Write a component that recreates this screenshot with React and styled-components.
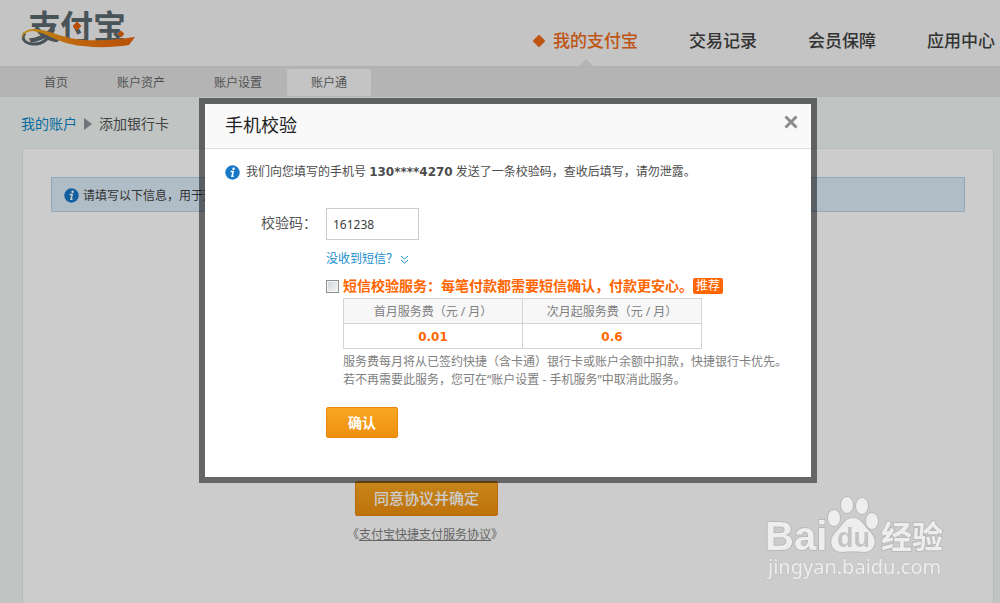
import { useState } from 'react';
import styled, { createGlobalStyle } from 'styled-components';

const GlobalStyle = createGlobalStyle`
  * {
    box-sizing: border-box;
  }

  body {
    margin: 0;
    color: #4c4c4c;
    background: #f0f5f4;
    font-family: 'Noto Sans', 'Noto Sans CJK SC', sans-serif;
    font-size: 12px;
    line-height: 18px;
  }

  h2,
  p,
  ul,
  ol {
    margin: 0;
    padding: 0;
  }

  ul,
  ol {
    list-style: none;
  }

  button,
  input {
    font-family: inherit;
  }
`;

const Page = styled.div`
  display: flex;
  flex-direction: column;
  min-height: 100vh;
`;

const Header = styled.header`
  display: flex;
  justify-content: space-between;
  align-items: flex-start;
  height: 66px;
  padding: 0 5px 0 20px;
  background: #f6f6f6;
`;

const LogoLink = styled.a`
  display: block;

  svg {
    display: block;
  }
`;

const MainNav = styled.ul`
  display: flex;
  gap: 51px;
  padding-top: 16px;
`;

const MainNavItem = styled.li`
  position: relative;
  height: 50px;

  &::after {
    content: '';
    display: ${({ $active }) => ($active ? 'block' : 'none')};
    position: absolute;
    bottom: 0;
    left: 50%;
    margin-left: -7px;
    border: 7px solid transparent;
    border-top: 0;
    border-bottom-color: #e2e2e2;
  }
`;

const MainNavLink = styled.a`
  display: flex;
  align-items: center;
  gap: 8px;
  color: ${({ $active }) => ($active ? '#ef6a18' : '#404040')};
  font-size: 17px;
  font-weight: 500;
  line-height: 50px;
  text-decoration: none;
`;

const SubNav = styled.ul`
  display: flex;
  align-items: center;
  gap: 1px;
  height: 31px;
  padding-left: 20px;
  border-top: 1px solid #dcdcdc;
  background: #e2e2e2;
`;

const SubNavLink = styled.a`
  display: block;
  padding: 1px 24px 0;
  border-radius: 2px;
  background: ${({ $active }) => ($active ? '#f6f6f6' : 'transparent')};
  color: #666;
  line-height: 26px;
  text-decoration: none;
`;

const Breadcrumb = styled.ol`
  display: flex;
  align-items: center;
  gap: 7px;
  height: 51px;
  padding: 2px 21px 0;
  color: #555;
  font-size: 14px;

  a {
    color: #0b87c8;
    text-decoration: none;
  }

  li {
    display: flex;
    align-items: center;
    gap: 7px;
  }
`;

const Panel = styled.main`
  flex: 1;
  margin: 0 6px 0 22px;
  padding: 28px 28px 0;
  border: 1px solid #e8e8e8;
  border-bottom: 0;
  background: #fff;
`;

const InfoBar = styled.p`
  display: flex;
  align-items: center;
  gap: 4px;
  height: 35px;
  padding: 2px 12px 0;
  border: 1px solid #bad3e6;
  background: #dcecf8;
  color: #404040;
`;

const Agreement = styled.form`
  display: flex;
  flex-direction: column;
  align-items: flex-start;
  padding: 269px 0 0 304px;
`;

const OrangeButton = styled.button`
  height: ${({ $large }) => ($large ? '35px' : '31px')};
  padding: ${({ $large }) => ($large ? '0 18px 2px' : '0 21px')};
  border: 1px solid #ea860d;
  border-radius: 2px;
  background: linear-gradient(#f9a722, #ef8f10);
  color: #fff;
  font-size: ${({ $large }) => ($large ? '15px' : '14px')};
  font-weight: ${({ $large }) => ($large ? 500 : 700)};
  line-height: 20px;
  cursor: pointer;
`;

const AgreementNote = styled.p`
  margin: 10px 0 0 -8px;
  color: #808080;

  a {
    color: inherit;
  }
`;

const Overlay = styled.div`
  position: fixed;
  inset: 0;
  display: flex;
  justify-content: center;
  align-items: flex-start;
  padding: 98px 0 0 16px;
  background: rgba(0, 0, 0, 0.2);
`;

const Dialog = styled.section`
  width: 100%;
  max-width: 618px;
  border: 6px solid rgba(0, 0, 0, 0.5);
  background: #fff;
  background-clip: padding-box;
`;

const DialogHeader = styled.div`
  display: flex;
  justify-content: space-between;
  align-items: flex-start;
  height: 45px;
  padding: 0 13px 0 20px;
  border-bottom: 1px solid #ddd;
  background: #f9f9f9;

  h2 {
    color: #222;
    font-size: 18px;
    font-weight: 400;
    line-height: 42px;
  }
`;

const CloseButton = styled.button`
  margin-top: 11px;
  padding: 0;
  border: 0;
  background: none;
  cursor: pointer;

  svg {
    display: block;
  }
`;

const DialogBody = styled.div`
  padding: 13px 20px 39px;
`;

const SentMessage = styled.p`
  display: flex;
  align-items: center;
  gap: 6px;
  line-height: 20px;

  strong {
    font-family: 'DejaVu Sans', sans-serif;
  }
`;

const CodeForm = styled.form`
  display: grid;
  grid-template-columns: 101px 1fr;
  margin-top: 26px;
`;

const CodeLabel = styled.label`
  padding-left: 36px;
  color: #555;
  font-size: 14px;
  line-height: 30px;
  white-space: nowrap;
`;

const Fields = styled.div`
  display: flex;
  flex-direction: column;
  align-items: flex-start;
`;

const CodeInput = styled.input`
  width: 93px;
  height: 32px;
  padding: 0 6px;
  border: 1px solid #ccc;
  background: #fff;
  color: #404040;
  font-size: 12px;
`;

const HelpLink = styled.a`
  display: flex;
  align-items: center;
  gap: 2px;
  margin-top: 10px;
  color: #1a8fd0;
  text-decoration: none;
`;

const Service = styled.div`
  display: grid;
  grid-template-columns: 12px 1fr;
  column-gap: 5px;
  margin-top: 8px;
`;

const Checkbox = styled.input`
  appearance: none;
  width: 13px;
  height: 13px;
  margin: 4px 0 0;
  border: 1px solid #8e8f8f;
  background: linear-gradient(135deg, #cfd3d7, #f6f6f6);
  box-shadow: inset 0 0 0 1px #f4f4f4;

  &:checked {
    background: #ff6600;
  }
`;

const ServiceTitle = styled.div`
  display: flex;
  align-items: center;
  height: 20px;
  color: #ff6600;
  font-size: 14px;
  white-space: nowrap;

  label {
    font-weight: 700;
  }
`;

const Badge = styled.span`
  padding: 0 3px;
  border-radius: 2px;
  background: #ff6600;
  color: #fff;
  font-size: 12px;
  line-height: 16px;
`;

const FeeTable = styled.table`
  width: 359px;
  margin-top: 2px;
  border-collapse: collapse;
  table-layout: fixed;
  text-align: center;

  th,
  td {
    height: 25px;
    padding: 2px 0 0;
    border: 1px solid #d4d4d4;
  }

  th {
    background: #f7f7f7;
    color: #808080;
    font-weight: 400;
  }

  td {
    color: #ff6600;
    font-family: 'DejaVu Sans', sans-serif;
    font-weight: 700;
  }
`;

const Notes = styled.p`
  margin: 4px 0 18px;
  color: #808080;
  white-space: nowrap;
`;

const Watermark = styled.svg`
  position: fixed;
  right: 50px;
  bottom: 15px;
`;

const mainNav = ['我的支付宝', '交易记录', '会员保障', '应用中心'];
const subNav = ['首页', '账户资产', '账户设置', '账户通'];
const fees = [
  { title: '首月服务费（元 / 月）', price: '0.01' },
  { title: '次月起服务费（元 / 月）', price: '0.6' },
];

const Logo = () => (
  <svg width='118' height='54' viewBox='20 0 118 54' role='img' aria-label='支付宝'>
    <defs>
      <linearGradient id='ribbon' x1='0' x2='1'>
        <stop offset='0' stopColor='#f0b01c' />
        <stop offset='0.5' stopColor='#ee7d12' />
        <stop offset='1' stopColor='#e8650a' />
      </linearGradient>
    </defs>
    <g
      fill='#5c696e'
      fontFamily="'Noto Sans CJK SC', sans-serif"
      fontSize='33'
      fontWeight='700'
    >
      <text x='28' y='39'>支</text>
      <text x='60' y='39'>付</text>
      <text x='93' y='39'>宝</text>
    </g>
    <path
      d='M54 29C49 39 42 45 32 44C24 43 21 38 25 33'
      fill='none'
      stroke='#5c696e'
      strokeWidth='3'
    />
    <path
      d='M22 39C21 32 27 29 34 29C48 29 60 38 84 40C103 41 121 39 135 37L129 45C111 48 88 48 70 44C53 40 45 32 33 31C27 31 23 34 22 39Z'
      fill='url(#ribbon)'
    />
    <path d='M77 22L81 26L77 30L73 26Z' fill='#e8650a' stroke='#e8650a' strokeLinejoin='round' />
    <path d='M121 31L124 34L121 37L118 34Z' fill='#e8650a' stroke='#e8650a' strokeLinejoin='round' />
  </svg>
);

const InfoIcon = () => (
  <svg width='15' height='15' viewBox='0 0 15 15' aria-hidden='true'>
    <circle cx='7.5' cy='7.5' r='7.2' fill='#1878c8' />
    <circle cx='8.6' cy='3.8' r='1.3' fill='#fff' />
    <path d='M5.6 6.5H8.2L7 11.2H8.6' fill='none' stroke='#fff' strokeWidth='1.5' />
  </svg>
);

const BaiduMark = () => (
  <Watermark width='200' height='94' viewBox='0 0 200 94' role='img' aria-label='Baidu 经验'>
    <g
      fill='#eee'
      stroke='#bababa'
      strokeWidth='2'
      paintOrder='stroke'
      fontFamily="'Liberation Sans', 'Noto Sans CJK SC', sans-serif"
      fontWeight='700'
    >
      <text x='15' y='56' fontSize='40'>Bai</text>
      <text x='131' y='54' fontSize='31'>经验</text>
      <ellipse cx='84' cy='24' rx='6' ry='8' />
      <ellipse cx='97' cy='11' rx='6' ry='8' />
      <ellipse cx='112' cy='12' rx='6' ry='8' />
      <ellipse cx='122' cy='27' rx='6' ry='8' />
      <path d='M103 24C111 24 114 32 120 38C129 47 124 58 114 58C107 57 99 57 92 58C82 58 77 47 86 38C92 32 95 24 103 24Z' />
    </g>
    <text
      x='87'
      y='53'
      fill='#c4c4c4'
      fontFamily="'Liberation Sans', sans-serif"
      fontSize='27'
      fontWeight='700'
    >
      du
    </text>
    <text
      x='18'
      y='80'
      fill='#eee'
      stroke='#bdbdbd'
      paintOrder='stroke'
      fontFamily="'Noto Sans', sans-serif"
      fontSize='20'
    >
      jingyan.baidu.com
    </text>
  </Watermark>
);

const VerifyDialog = () => {
  const [code, setCode] = useState('161238');

  return (
    <Overlay>
      <Dialog role='dialog' aria-labelledby='dialog-title'>
        <DialogHeader>
          <h2 id='dialog-title'>手机校验</h2>
          <CloseButton type='button' aria-label='关闭'>
            <svg width='14' height='14' viewBox='0 0 14 14'>
              <path d='M1.5 1.5L12.5 12.5M12.5 1.5L1.5 12.5' stroke='#8c8c8c' strokeWidth='3' />
            </svg>
          </CloseButton>
        </DialogHeader>
        <DialogBody>
          <SentMessage>
            <InfoIcon />
            <span>
              我们向您填写的手机号 <strong>130****4270</strong>{' '}
              发送了一条校验码，查收后填写，请勿泄露。
            </span>
          </SentMessage>
          <CodeForm onSubmit={(e) => e.preventDefault()}>
            <CodeLabel htmlFor='code'>校验码：</CodeLabel>
            <Fields>
              <CodeInput
                id='code'
                type='text'
                value={code}
                onChange={(e) => setCode(e.target.value)}
              />
              <HelpLink href='#help'>
                没收到短信？
                <svg width='9' height='9' viewBox='0 0 9 9' aria-hidden='true'>
                  <path
                    d='M1 1L4.5 4L8 1M1 5L4.5 8L8 5'
                    fill='none'
                    stroke='#1a8fd0'
                  />
                </svg>
              </HelpLink>
              <Service>
                <Checkbox id='service' type='checkbox' />
                <div>
                  <ServiceTitle>
                    <label htmlFor='service'>
                      短信校验服务：每笔付款都需要短信确认，付款更安心。
                    </label>
                    <Badge>推荐</Badge>
                  </ServiceTitle>
                  <FeeTable>
                    <thead>
                      <tr>
                        {fees.map((fee) => (
                          <th key={fee.title}>{fee.title}</th>
                        ))}
                      </tr>
                    </thead>
                    <tbody>
                      <tr>
                        {fees.map((fee) => (
                          <td key={fee.title}>{fee.price}</td>
                        ))}
                      </tr>
                    </tbody>
                  </FeeTable>
                  <Notes>
                    服务费每月将从已签约快捷（含卡通）银行卡或账户余额中扣款，快捷银行卡优先。
                    <br />
                    若不再需要此服务，您可在“账户设置 - 手机服务”中取消此服务。
                  </Notes>
                </div>
              </Service>
              <OrangeButton type='submit'>确认</OrangeButton>
            </Fields>
          </CodeForm>
        </DialogBody>
      </Dialog>
    </Overlay>
  );
};

const App = () => {
  return (
    <>
      <GlobalStyle />
      <Page>
        <Header>
          <LogoLink href='#home'>
            <Logo />
          </LogoLink>
          <nav>
            <MainNav>
              {mainNav.map((item, i) => (
                <MainNavItem key={item} $active={i === 0}>
                  <MainNavLink href='#nav' $active={i === 0}>
                    {i === 0 && (
                      <svg width='12' height='12' viewBox='0 0 12 12' aria-hidden='true'>
                        <path
                          d='M6 1L11 6L6 11L1 6Z'
                          fill='#ef6a18'
                          stroke='#ef6a18'
                          strokeWidth='2'
                          strokeLinejoin='round'
                        />
                      </svg>
                    )}
                    {item}
                  </MainNavLink>
                </MainNavItem>
              ))}
            </MainNav>
          </nav>
        </Header>
        <nav>
          <SubNav>
            {subNav.map((item) => (
              <li key={item}>
                <SubNavLink href='#sub' $active={item === '账户通'}>
                  {item}
                </SubNavLink>
              </li>
            ))}
          </SubNav>
        </nav>
        <Breadcrumb>
          <li>
            <a href='#account'>我的账户</a>
            <svg width='8' height='12' viewBox='0 0 8 12' aria-hidden='true'>
              <path d='M0 0L8 6L0 12Z' fill='#8c939c' />
            </svg>
          </li>
          <li>添加银行卡</li>
        </Breadcrumb>
        <Panel>
          <InfoBar>
            <InfoIcon />
            请填写以下信息，用于开
          </InfoBar>
          <Agreement onSubmit={(e) => e.preventDefault()}>
            <OrangeButton type='submit' $large>
              同意协议并确定
            </OrangeButton>
            <AgreementNote>
              《<a href='#agreement'>支付宝快捷支付服务协议</a>》
            </AgreementNote>
          </Agreement>
        </Panel>
      </Page>
      <VerifyDialog />
      <BaiduMark />
    </>
  );
};

export default App;
